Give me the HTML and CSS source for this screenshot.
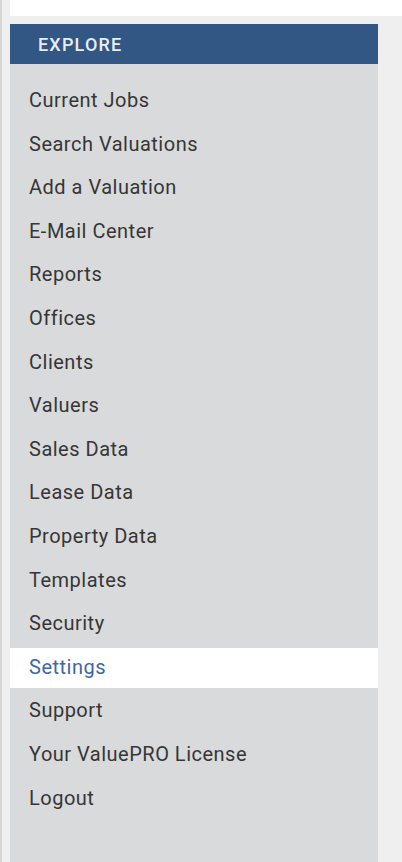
FILE: index.html
```html
<!DOCTYPE html>
<html lang="en">
<head>
    <meta charset="UTF-8">
    <meta name="viewport" content="width=device-width, initial-scale=1.0">
    <title>Explore</title>
    <link rel="stylesheet" href="styles.css">
</head>
<body>
    <div class="page">
        <div class="topbar"></div>

        <!-- Sidebar menu -->
        <aside class="sidebar">
            <div class="sidebar-title">EXPLORE</div>
            <ul class="menu">
                <li><a href="#">Current Jobs</a></li>
                <li><a href="#">Search Valuations</a></li>
                <li><a href="#">Add a Valuation</a></li>
                <li><a href="#">E-Mail Center</a></li>
                <li><a href="#">Reports</a></li>
                <li><a href="#">Offices</a></li>
                <li><a href="#">Clients</a></li>
                <li><a href="#">Valuers</a></li>
                <li><a href="#">Sales Data</a></li>
                <li><a href="#">Lease Data</a></li>
                <li><a href="#">Property Data</a></li>
                <li><a href="#">Templates</a></li>
                <li><a href="#">Security</a></li>
                <li><a href="#" class="active">Settings</a></li>
                <li><a href="#">Support</a></li>
                <li><a href="#">Your ValuePRO License</a></li>
                <li><a href="#">Logout</a></li>
            </ul>
        </aside>
    </div>
</body>
</html>
```
FILE: styles.css
```css
* {
    margin: 0;
    padding: 0;
    box-sizing: border-box;
}

html, body {
    height: 100%;
}

body {
    font-family: Roboto, 'Liberation Sans', Arial, sans-serif;
    background: #efefef;
    border-left: 2px solid #d6d6d6;
    overflow: hidden;
}

.page {
    padding-left: 8px;
    padding-right: 24px;
    min-height: 100%;
    display: flex;
    flex-direction: column;
}

.topbar {
    height: 16px;
    background: #fff;
    margin-right: -24px;
}

.sidebar {
    margin-top: 8px;
    flex: 1;
    background: #d9dadb;
}

.sidebar-title {
    height: 40px;
    background: #325785;
    color: #e9edf3;
    font-size: 18px;
    font-weight: 500;
    letter-spacing: 1.2px;
    line-height: 42px;
    padding-left: 28px;
}

.menu {
    list-style: none;
    padding-top: 17px;
}

.menu li {
    margin-bottom: 3.6px;
}

.menu a {
    display: block;
    height: 40px;
    line-height: 39px;
    padding-left: 19px;
    font-size: 20px;
    letter-spacing: 0.5px;
    color: #363636;
    text-decoration: none;
}

.menu a.active {
    background: #fff;
    color: #3f67a3;
}
```
